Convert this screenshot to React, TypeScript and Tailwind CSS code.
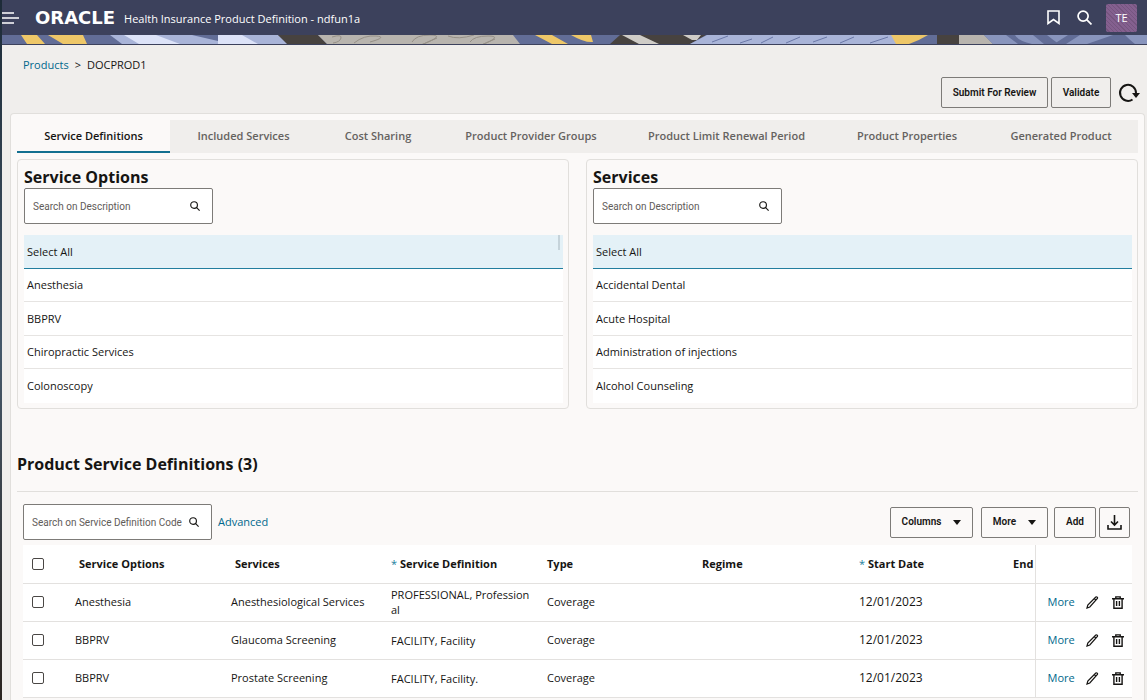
import React, { useState } from 'react';

const tabs = [
  'Service Definitions',
  'Included Services',
  'Cost Sharing',
  'Product Provider Groups',
  'Product Limit Renewal Period',
  'Product Properties',
  'Generated Product'
];

const serviceOptions = ['Select All', 'Anesthesia', 'BBPRV', 'Chiropractic Services', 'Colonoscopy'];

const services = [
  'Select All',
  'Accidental Dental',
  'Acute Hospital',
  'Administration of injections',
  'Alcohol Counseling'
];

const definitions = [
  {
    id: 1,
    option: 'Anesthesia',
    service: 'Anesthesiological Services',
    definition: 'PROFESSIONAL, Professional',
    type: 'Coverage',
    start: '12/01/2023'
  },
  {
    id: 2,
    option: 'BBPRV',
    service: 'Glaucoma Screening',
    definition: 'FACILITY, Facility',
    type: 'Coverage',
    start: '12/01/2023'
  },
  {
    id: 3,
    option: 'BBPRV',
    service: 'Prostate Screening',
    definition: 'FACILITY, Facility.',
    type: 'Coverage',
    start: '12/01/2023'
  }
];

function BannerStrip() {
  return (
    <svg
      className="block h-[10px] w-full border-b border-[#3c415c] bg-[#626d97]"
      viewBox="0 0 1145 9"
      preserveAspectRatio="xMinYMin slice"
      aria-hidden="true"
    >
      <path d="M19 0h16l8 9H25z M46 0h35l4 9H61z" fill="#eec768" />
      <path d="M108 0H276l11 9H120z" fill="#a9b4d8" />
      <path d="M122 0h32l24 9H137z M216 0h24l16 9h-40z" fill="#dde3f8" />
      <path d="M190 0h26v6z" fill="#626d97" />
      <path d="M276 0h40l9 9h-40z" fill="#47423f" />
      <path d="M316 0h195l7 9H325z" fill="#b8b4ae" />
      <path
        d="M330 2q10-3 9 1t-8 5 M352 8q10-8 22-7t-6 6 M410 7q4-7 18-7t-2 7 9-4 M446 1q10 4 26-1 M468 7q4-6 18-6t-2 7 9-4"
        fill="none"
        stroke="#969087"
        strokeWidth="1"
      />
      <path d="M533 0h17l16 9h-16z M569 0h20l2 7q-8 1-22-7z" fill="#eec768" />
      <path d="M618 0h86l-16 9H608z" fill="#47423f" />
      <path d="M620 0h18l19 9h-20z M681 0h18l-4 5h-5z" fill="#cfccc7" />
      <path d="M705 0h188l5 9H688z" fill="#a9b4d8" />
      <path
        d="M710 7l16-6 M738 8l12-4 M759 8l12-6 M784 8l14-6 M811 7l14-5 M838 8l14-6 M868 8l18-6"
        stroke="#6c79a8"
        strokeWidth="1"
      />
      <path d="M889 0h37q-8 5-19 9h-13z" fill="#eec768" />
      <path d="M935 0h22v9h-22z" fill="#47423f" />
      <path d="M957 0h25l9 9h-34z" fill="#b8b4ae" />
      <path d="M982 0h163v9H991z" fill="#8995bd" />
      <path
        d="M1004 0h9q3 6 17 9h-14z M1031 0h14q6 5 12 9h-15z M1066 0h12l-14 9h-12z M1111 0h12q6 6 10 9h-48z"
        fill="#626d97"
      />
    </svg>
  );
}

function SearchIcon({ className, strokeWidth = 1.2 }: { className: string; strokeWidth?: number }) {
  return (
    <svg className={className} viewBox="0 0 14 14" fill="none" stroke="currentColor" strokeWidth={strokeWidth}>
      <circle cx="5.700" cy="5.700" r="4.700" />
      <path d="M9 9l4.500 4.500" />
    </svg>
  );
}

function Header() {
  return (
    <header>
      <div className="flex h-[35px] items-center bg-[#3c415c] pr-[10px] text-white">
        <button type="button" aria-label="Open menu" className="w-[17px]">
          <svg className="h-[12px] w-[17px]" viewBox="0 0 17 12" stroke="currentColor" strokeWidth="1.5">
            <path d="M0 1h12M0 6h17M0 11h12" />
          </svg>
        </button>
        <span className="ml-[16px] font-['DejaVu_Sans'] text-[18px] leading-none font-bold">ORACLE</span>
        <span className="ml-[9px] flex-1 pt-[2px] font-medium whitespace-nowrap">
          Health Insurance Product Definition - ndfun1a
        </span>
        <button type="button" aria-label="Bookmarks">
          <svg className="h-[15px] w-[13px]" viewBox="0 0 13 15" fill="none" stroke="currentColor" strokeWidth="1.6">
            <path d="M1 1h11v12.500L6.500 9.500 1 13.500z" />
          </svg>
        </button>
        <button type="button" aria-label="Search" className="ml-[17px]">
          <SearchIcon className="h-[15px] w-[15px]" strokeWidth={1.6} />
        </button>
        <button
          type="button"
          className="ml-[14px] h-[28px] w-[31px] rounded-xs bg-[repeating-linear-gradient(45deg,#84608f_0px,#84608f_2px,#75557f_2px,#75557f_3px)] font-medium"
        >
          TE
        </button>
      </div>
      <BannerStrip />
    </header>
  );
}

function SearchBox({ id, label }: { id: string; label: string }) {
  return (
    <div className="flex h-[36px] w-[189px] items-center rounded-xs border border-[#7d7b78] bg-white pr-[12px] pl-2">
      <input
        id={id}
        type="text"
        aria-label={label}
        placeholder={label}
        className="h-[20px] w-full min-w-0 font-[Roboto] text-[10px] outline-none placeholder:text-[#5f5c59]"
      />
      <SearchIcon className="h-[10px] w-[10px] shrink-0" strokeWidth={1.6} />
    </div>
  );
}

interface ListPanelProps {
  id: string;
  title: string;
  items: string[];
  scrollable?: boolean;
}

function ListPanel({ id, title, items, scrollable }: ListPanelProps) {
  const [selected, setSelected] = useState('Select All');

  return (
    <section className="rounded border border-[#e1dfdc] pt-[6px] pr-[5px] pb-[5px] pl-[6px]">
      <h2 className="text-[16px] leading-[22px] font-bold">{title}</h2>
      <SearchBox id={id} label="Search on Description" />
      <ul className="relative mt-[11px] bg-white">
        {items.map((item) => (
          <li key={item} className="group h-[33px] odd:h-[34px]">
            <button
              type="button"
              onClick={() => setSelected(item)}
              className={`flex h-full w-full items-center border-b px-[3px] text-left ${
                selected === item
                  ? 'border-[#227e9e] bg-[#e4f1f7]'
                  : 'border-[#e6e4e2] group-last:border-transparent'
              }`}
            >
              {item}
            </button>
          </li>
        ))}
      </ul>
      {scrollable && (
        <div className="relative">
          <div aria-hidden="true" className="absolute right-[3px] bottom-[153px] h-[15px] w-[2px] bg-[#c5d3da]" />
        </div>
      )}
    </section>
  );
}

function ActionButton({ children, className = '', label }: { children: React.ReactNode; className?: string; label?: string }) {
  return (
    <button
      type="button"
      aria-label={label}
      className={`flex h-[31px] items-center justify-center rounded-xs border border-[#7d7b78] font-[Roboto] text-[10px] font-semibold ${className}`}
    >
      {children}
    </button>
  );
}

function Caret() {
  return (
    <svg className="h-[5px] w-[8px]" viewBox="0 0 8 5" fill="currentColor">
      <path d="M0 0h8L4 5z" />
    </svg>
  );
}

function PencilIcon() {
  return (
    <svg className="h-[13px] w-[13px]" viewBox="0 0 13 13" fill="none" stroke="currentColor" strokeWidth="1.2">
      <path d="M1 12l.8-3L9.800 1q.8-.5 1.400.1t.2 1.400L3.800 11z M8.300 2.500l1.800 1.800" />
    </svg>
  );
}

function TrashIcon() {
  return (
    <svg className="h-[13px] w-[12px]" viewBox="0 0 12 13" fill="none" stroke="currentColor" strokeWidth="1.4">
      <path d="M0 2.800h12 M3.800 2.500V.9h4.400v1.600 M1.900 3v9.200h8.200V3 M4.600 5v5 M7.400 5v5" />
    </svg>
  );
}

function CheckBox({ label }: { label: string }) {
  return (
    <input
      type="checkbox"
      aria-label={label}
      className="block h-[12px] w-[12px] appearance-none rounded-xs border border-[#4a4745] bg-white checked:bg-[#227e9e]"
    />
  );
}

function DefinitionsTable() {
  return (
    <table className="w-full table-fixed border-collapse bg-white text-left">
      <colgroup>
        <col className="w-[44px]" />
        <col className="w-[156px]" />
        <col className="w-[160px]" />
        <col className="w-[156px]" />
        <col className="w-[155px]" />
        <col className="w-[157px]" />
        <col className="w-[154px]" />
        <col className="w-[30px]" />
        <col className="w-[97px]" />
      </colgroup>
      <thead>
        <tr className="h-[38px] border-b border-[#e3e1df] font-bold whitespace-nowrap">
          <th className="pl-[9px]">
            <CheckBox label="Select all rows" />
          </th>
          <th className="pl-3">Service Options</th>
          <th className="pl-3">Services</th>
          <th className="pl-2">
            <span className="font-normal text-[#227e9e]">*</span> Service Definition
          </th>
          <th className="pl-2">Type</th>
          <th className="pl-2">Regime</th>
          <th className="pl-2">
            <span className="font-normal text-[#227e9e]">*</span> Start Date
          </th>
          <th className="pl-2">End</th>
          <th aria-label="Actions" className="border-l border-[#e3e1df]"></th>
        </tr>
      </thead>
      <tbody>
        {definitions.map((row) => (
          <tr key={row.id} className="h-[38px] border-b border-[#e3e1df]">
            <td className="pl-[9px]">
              <CheckBox label={`Select row ${row.id}`} />
            </td>
            <td className="pl-2">{row.option}</td>
            <td className="pl-2 whitespace-nowrap">{row.service}</td>
            <td className="pr-2 pl-2 leading-[15px] break-all">{row.definition}</td>
            <td className="pl-2">{row.type}</td>
            <td className="pl-2"></td>
            <td className="pl-2 text-[12px]">{row.start}</td>
            <td></td>
            <td className="border-l border-[#e3e1df] pl-3">
              <div className="flex items-center">
                <a href="#" className="w-[38px] text-[#00688c]">
                  More
                </a>
                <button type="button" aria-label="Edit">
                  <PencilIcon />
                </button>
                <button type="button" aria-label="Delete" className="ml-[13px]">
                  <TrashIcon />
                </button>
              </div>
            </td>
          </tr>
        ))}
      </tbody>
    </table>
  );
}

export default function App() {
  const [activeTab, setActiveTab] = useState(tabs[0]);

  return (
    <div className="flex min-h-screen bg-[#f0eeec] font-['Open_Sans',sans-serif] text-[11px] leading-[16px] text-[#161513]">
      <div className="w-[2px] shrink-0 bg-linear-to-b from-[#1d2b38] via-[#45586a] to-[#2a2420]" />
      <div className="flex min-w-0 flex-1 flex-col">
        <Header />

        <nav aria-label="Breadcrumb" className="flex gap-[6px] px-[21px] pt-[12px]">
          <a href="#" className="text-[#00688c]">
            Products
          </a>
          <span>&gt;</span>
          <span>DOCPROD1</span>
        </nav>

        <div className="mt-[4px] flex items-center justify-end gap-[3px] pr-[7px]">
          <ActionButton className="w-[107px]">Submit For Review</ActionButton>
          <ActionButton className="w-[60px]">Validate</ActionButton>
          <button type="button" aria-label="Refresh" className="ml-1">
            <svg className="h-[20px] w-[22px]" viewBox="0 0 22 20" fill="none" stroke="currentColor" strokeWidth="2">
              <path d="M14.500 16.500A8 8 0 1 1 18 10" />
              <path d="M14 10h8l-4 5z" fill="currentColor" stroke="none" />
            </svg>
          </button>
        </div>

        <main className="mt-[5px] mr-[2px] ml-2 flex-1 rounded-t border border-b-0 border-[#e1dfdc] bg-[#fbf9f8] px-[6px] pt-[6px]">
          <div
            role="tablist"
            className="grid grid-cols-[153fr_147fr_122fr_184fr_207fr_154fr_154fr] bg-[#f0eeec] font-semibold"
          >
            {tabs.map((tab) => (
              <button
                key={tab}
                type="button"
                role="tab"
                aria-selected={activeTab === tab}
                onClick={() => setActiveTab(tab)}
                className={`h-[33px] border-b-2 whitespace-nowrap ${
                  activeTab === tab ? 'border-[#126f90] bg-[#fbf9f8]' : 'border-transparent text-[#65625f]'
                }`}
              >
                {tab}
              </button>
            ))}
          </div>

          <div className="mt-[6px] grid grid-cols-2 gap-[17px]">
            <ListPanel id="option-search" title="Service Options" items={serviceOptions} scrollable />
            <ListPanel id="service-search" title="Services" items={services} />
          </div>

          <h2 className="mt-[44px] border-b border-[#e1dfdc] pb-[16px] text-[16px] leading-[22px] font-bold">
            Product Service Definitions (3)
          </h2>

          <div className="px-[6px]">
            <div className="flex items-center pt-[12px] pr-[2px] pb-[5px]">
              <SearchBox id="code-search" label="Search on Service Definition Code" />
              <a href="#" className="ml-[6px] flex-1 text-[#00688c]">
                Advanced
              </a>
              <ActionButton className="w-[83px] gap-3">
                Columns <Caret />
              </ActionButton>
              <ActionButton className="ml-2 w-[67px] gap-3">
                More <Caret />
              </ActionButton>
              <ActionButton className="ml-[6px] w-[42px]">Add</ActionButton>
              <ActionButton className="ml-[3px] w-[31px]" label="Download">
                <svg className="h-[15px] w-[15px]" viewBox="0 0 15 15" fill="none" stroke="currentColor" strokeWidth="1.600">
                  <path d="M1 10v4h13v-4 M7.500 0v10 M4 6.500L7.500 10 11 6.500" />
                </svg>
              </ActionButton>
            </div>
            <DefinitionsTable />
          </div>
        </main>
      </div>
    </div>
  );
}
